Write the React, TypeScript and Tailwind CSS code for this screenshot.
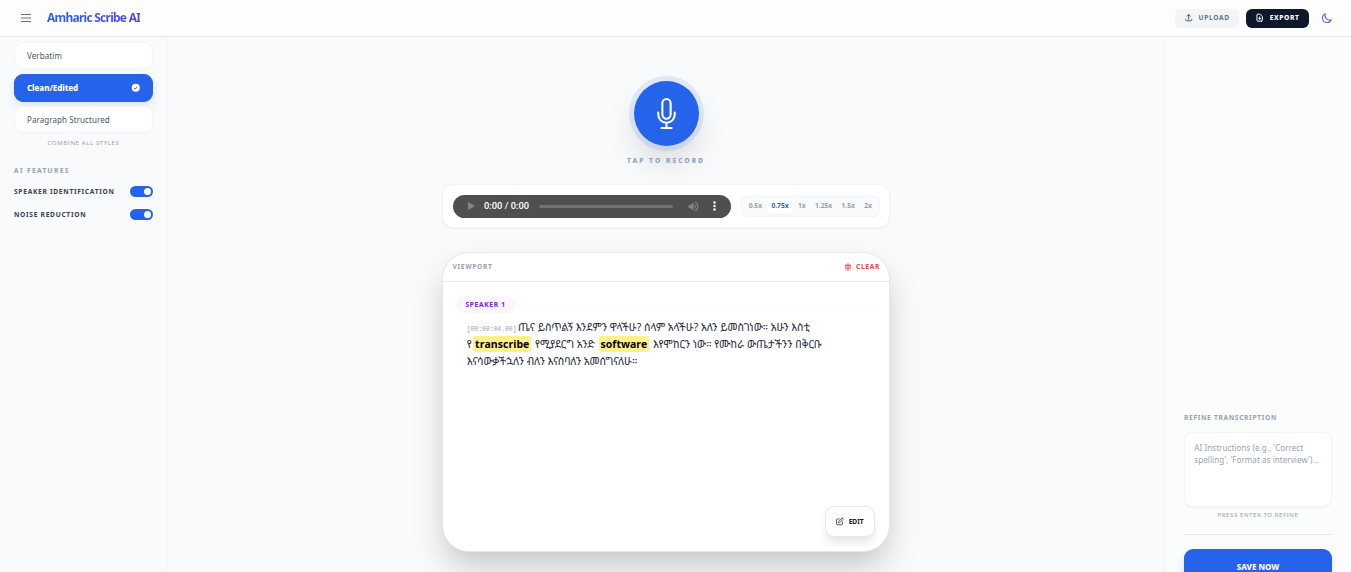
import type { ReactNode } from "react";
import clsx from "clsx";

const speeds = ["0.5x", "0.75x", "1x", "1.25x", "1.5x", "2x"];

function Icon({
  children,
  className,
  strokeWidth = 1.5,
}: {
  children: ReactNode;
  className?: string;
  strokeWidth?: number;
}) {
  return (
    <svg
      viewBox="0 0 24 24"
      fill="none"
      stroke="currentColor"
      strokeWidth={strokeWidth}
      strokeLinecap="round"
      strokeLinejoin="round"
      className={clsx("shrink-0", className)}
      aria-hidden
    >
      {children}
    </svg>
  );
}

function Header() {
  return (
    <header className="flex h-[37px] shrink-0 items-center border-b border-gray-200 bg-[#fdfdfe] pl-5 pr-[18px]">
      <button className="text-slate-500" aria-label="Menu">
        <svg viewBox="0 0 12 12" className="size-3" aria-hidden>
          <path d="M1 2.5h10M1 9.5h10" stroke="currentColor" strokeWidth="1" />
          <path d="M1 6h10" stroke="currentColor" strokeWidth="2" opacity=".5" />
        </svg>
      </button>
      <h1 className="ml-[15px] bg-gradient-to-r from-[#2563eb] to-[#4f46e5] bg-clip-text text-[12px] leading-4 font-bold tracking-[-0.75px] text-transparent">
        Amharic Scribe AI
      </h1>
      <div className="ml-auto flex items-center">
        <button className="flex h-[19px] w-16 items-center justify-center gap-[5px] rounded-md bg-gray-100 text-[6.67px] font-bold tracking-[0.67px] text-slate-500">
          <Icon className="size-[9.33px] text-slate-600" strokeWidth={2.5}>
            <path d="M4 16v1a3 3 0 0 0 3 3h10a3 3 0 0 0 3-3v-1m-4-8-4-4m0 0L8 8m4-4v12" />
          </Icon>
          UPLOAD
        </button>
        <button className="ml-[7px] flex h-[19px] w-[63px] items-center justify-center gap-[5px] rounded-md bg-slate-900 text-[6.67px] font-extrabold tracking-[0.6px] text-white">
          <Icon className="size-[9.33px]" strokeWidth={2.5}>
            <path d="M12 10v6m0 0-3-3m3 3 3-3M17 21H7a2 2 0 0 1-2-2V5a2 2 0 0 1 2-2h5.586a1 1 0 0 1 .707.293l5.414 5.414a1 1 0 0 1 .293.707V19a2 2 0 0 1-2 2z" />
          </Icon>
          EXPORT
        </button>
        <button className="ml-3 text-[#6366f1]" aria-label="Toggle theme">
          <Icon className="size-3" strokeWidth={2.2}>
            <path d="M20.354 15.354A9 9 0 0 1 8.646 3.646 9.003 9.003 0 0 0 12 21a9.003 9.003 0 0 0 8.354-5.646z" />
          </Icon>
        </button>
      </div>
    </header>
  );
}

function StyleOption({ label, active }: { label: string; active?: boolean }) {
  return (
    <button
      className={clsx(
        "flex w-full items-center justify-between rounded-[9px] border px-3 text-[8px]",
        active
          ? "h-7 border-[#2563eb] bg-[#2563eb] font-extrabold tracking-[-0.05px] text-white shadow-[0_4px_10px_rgba(37,99,235,0.13)]"
          : "h-[27px] border-gray-100 bg-white tracking-[0.08px] text-gray-600",
      )}
    >
      {label}
      {active && (
        <svg viewBox="0 0 20 20" className="size-[9.5px]" aria-hidden>
          <circle cx="10" cy="10" r="8.500" fill="white" />
          <path
            d="m6.500 10.500 2.500 2.500 4.500-5.500"
            fill="none"
            stroke="#2563eb"
            strokeWidth="2"
          />
        </svg>
      )}
    </button>
  );
}

function Toggle({ label }: { label: string }) {
  return (
    <div className="flex h-[11px] items-center justify-between">
      <span className="text-[6.67px] leading-[10px] font-bold tracking-[0.7px] text-gray-700">
        {label}
      </span>
      <span className="flex h-[11px] w-[23px] items-center justify-end rounded-full bg-[#2563eb] pr-[2px]">
        <span className="size-[7px] rounded-full bg-white" />
      </span>
    </div>
  );
}

function StylesPanel() {
  return (
    <aside className="w-[168px] shrink-0 border-r border-gray-100 px-[14px] pt-[5px]">
      <div className="flex flex-col">
        <StyleOption label="Verbatim" />
        <div className="mt-[5px] mb-1">
          <StyleOption label="Clean/Edited" active />
        </div>
        <StyleOption label="Paragraph Structured" />
      </div>
      <p className="mt-[6px] text-center text-[6px] leading-2 tracking-[0.62px] text-gray-400">
        COMBINE ALL STYLES
      </p>
      <h2 className="mt-[19px] text-[6.67px] leading-[10px] font-bold tracking-[1.33px] text-gray-400">
        AI FEATURES
      </h2>
      <div className="mt-[10px] flex flex-col gap-3">
        <Toggle label="SPEAKER IDENTIFICATION" />
        <Toggle label="NOISE REDUCTION" />
      </div>
    </aside>
  );
}

function Player() {
  return (
    <section className="mt-[18px] flex h-[44px] w-[448px] items-center justify-between rounded-[11px] border border-gray-100 bg-white pr-[9px] pl-[10px] shadow-xs">
      <div className="flex h-[23px] w-[278px] items-center rounded-full bg-[#4f4f4f] pl-[15px] pr-[15px]">
        <svg viewBox="0 0 7 8" className="h-2 w-[7px]" aria-hidden>
          <path d="M0 0v8l7-4z" fill="#858585" />
        </svg>
        <span className="ml-[9px] w-[46px] font-[Roboto,sans-serif] text-[9.33px] leading-3 font-medium whitespace-nowrap text-white">
          0:00 / 0:00
        </span>
        <span className="ml-[9px] h-[3px] flex-1 rounded-full bg-[#737373]" />
        <svg viewBox="0 0 24 24" className="ml-[14px] size-[13px]" fill="#858585" aria-hidden>
          <path d="M3 9v6h4l5 5V4L7 9H3zm13.500 3A4.500 4.500 0 0 0 14 7.970v8.050A4.500 4.500 0 0 0 16.500 12zM14 3.230v2.060a7 7 0 0 1 0 13.420v2.060a9 9 0 0 0 0-17.540z" />
        </svg>
        <svg viewBox="0 0 3 10" className="ml-[13px] h-[10px] w-[3px]" fill="white" aria-hidden>
          <circle cx="1.500" cy="1.500" r="1.200" />
          <circle cx="1.500" cy="5" r="1.200" />
          <circle cx="1.500" cy="8.500" r="1.200" />
        </svg>
      </div>
      <div className="flex h-[21px] w-[139px] items-center rounded-md border border-gray-100 bg-slate-50 pl-[2px] text-[6.67px] font-bold text-gray-400">
        {speeds.map((speed) => (
          <button
            key={speed}
            className={clsx(
              "flex h-[15px] items-center rounded px-[4.7px]",
              speed === "0.75x" && "bg-white text-[#2563eb] shadow-xs",
            )}
          >
            {speed}
          </button>
        ))}
      </div>
    </section>
  );
}

function Mark({ children }: { children: ReactNode }) {
  return (
    <mark className="mx-[1.33px] rounded-[2px] bg-[#fef08a] px-[1.67px] py-px text-[10.5px] font-bold text-black">
      {children}
    </mark>
  );
}

function Viewport() {
  return (
    <section className="relative mt-6 h-[300px] w-[448px] shrink-0 rounded-[27px] border border-gray-200 bg-white shadow-[0_17px_33px_-4px_rgba(0,0,0,0.22)]">
      <div className="flex h-[29px] items-center justify-between border-b border-gray-200 pr-[9px] pl-[9.5px] text-[6.67px] font-bold tracking-[0.67px]">
        <span className="text-gray-400">VIEWPORT</span>
        <button className="flex items-center gap-[3.5px] text-[#ef4444]">
          <Icon className="size-2" strokeWidth={2.5}>
            <path d="m19 7-.867 12.142A2 2 0 0 1 16.138 21H7.862a2 2 0 0 1-1.995-1.858L5 7m5 4v6m4-6v6m1-10V4a1 1 0 0 0-1-1h-4a1 1 0 0 0-1 1v3M4 7h16" />
          </Icon>
          CLEAR
        </button>
      </div>
      <div className="flex items-center gap-[7px] pt-[14px] pr-[14px] pl-[13px]">
        <span className="flex h-[17px] w-[60px] items-center justify-center rounded-full bg-[#faf5ff] pr-px text-[6.67px] font-bold tracking-[0.67px] text-[#7e22ce]">
          SPEAKER 1
        </span>
        <span className="h-px flex-1 bg-[#fbfbfc]" />
      </div>
      <div className="pt-[6px] pl-[23.67px] font-['Noto_Sans_Ethiopic','Noto_Sans',sans-serif] text-[10.5px] whitespace-nowrap text-gray-800">
        <p className="h-[17px] leading-[17px]">
          <span className="mr-[1.5px] font-['Liberation_Mono',monospace] text-[6.4px] text-gray-400">
            [00:00:04.00]
          </span>
          ጤና ይስጥልኝ እንደምን ዋላችሁ? ሰላም አላችሁ? አለን ይመስገነው። አሁን እስቲ
        </p>
        <p className="h-[17px] leading-[17px] tracking-[0.02px]">
          የ<span className="ml-[0.5px]" />
          <Mark>transcribe</Mark> የሚያደርግ አንድ <Mark>software</Mark> እየሞከርን
          ነው። የሙከራ ውጤታችንን በቅርቡ
        </p>
        <p className="h-[17px] leading-[17px]">
          እናሳውቃችኋለን ብለን እናስባለን አመሰግናለሁ።
        </p>
      </div>
      <button className="absolute right-[14px] bottom-[14px] flex h-[31px] w-[50px] items-center justify-center gap-1 rounded-[9px] border border-gray-200 bg-white pr-px text-[6.67px] font-bold text-gray-900 shadow-[0_7px_10px_-2px_rgba(0,0,0,0.11)]">
        <Icon className="size-[9.33px] text-gray-600" strokeWidth={2.5}>
          <path d="M11 5H6a2 2 0 0 0-2 2v11a2 2 0 0 0 2 2h11a2 2 0 0 0 2-2v-5m-1.414-9.414a2 2 0 1 1 2.828 2.828L11.828 15H9v-2.828l8.586-8.586z" />
        </Icon>
        EDIT
      </button>
    </section>
  );
}

function Workspace() {
  return (
    <main className="flex min-w-0 flex-1 flex-col items-center pt-11">
      <button
        className="flex size-[65px] shrink-0 items-center justify-center rounded-full bg-[#2563eb] text-white shadow-[0_0_0_5px_rgba(37,99,235,0.11),0_17px_33px_-4px_rgba(0,0,0,0.16)]"
        aria-label="Record"
      >
        <Icon className="size-[33px]">
          <path d="M12 18.750a6 6 0 0 0 6-6v-1.500m-6 7.500a6 6 0 0 1-6-6v-1.500m6 7.500v3.750m-3.750 0h7.500M12 15.750a3 3 0 0 1-3-3V4.500a3 3 0 1 1 6 0v8.250a3 3 0 0 1-3 3Z" />
        </Icon>
      </button>
      <p className="mt-[10px] text-[6.67px] leading-[10px] font-extrabold tracking-[2.03px] text-slate-400">
        TAP TO RECORD
      </p>
      <Player />
      <Viewport />
    </main>
  );
}

function RefinePanel() {
  return (
    <aside className="flex w-[187px] shrink-0 flex-col border-l border-gray-100 bg-[#fbfdfc] px-[19px] pt-[376px]">
      <h2 className="text-[6.67px] leading-[10px] font-bold tracking-[0.67px] text-gray-400">
        REFINE TRANSCRIPTION
      </h2>
      <textarea
        className="mt-[9px] h-[75px] shrink-0 resize-none rounded-[9px] border border-gray-100 bg-white px-[9.33px] py-[9px] text-[8px] leading-3 tracking-[0.07px] shadow-xs outline-none placeholder:text-gray-400"
        placeholder="AI Instructions (e.g., 'Correct spelling', 'Format as interview')..."
      />
      <p className="mt-1 text-center text-[6px] leading-2 tracking-[0.6px] text-gray-400">
        PRESS ENTER TO REFINE
      </p>
      <hr className="mt-[15px] border-gray-200" />
      <button className="mt-[14px] h-9 shrink-0 rounded-[9px] bg-[#2563eb] text-[8px] font-extrabold text-white shadow-[0_4px_10px_rgba(37,99,235,0.13)]">
        SAVE NOW
      </button>
    </aside>
  );
}

export default function App() {
  return (
    <div className="flex h-[572px] flex-col overflow-hidden bg-slate-50 font-['Noto_Sans',sans-serif]">
      <Header />
      <div className="flex min-h-0 flex-1">
        <StylesPanel />
        <Workspace />
        <RefinePanel />
      </div>
    </div>
  );
}
